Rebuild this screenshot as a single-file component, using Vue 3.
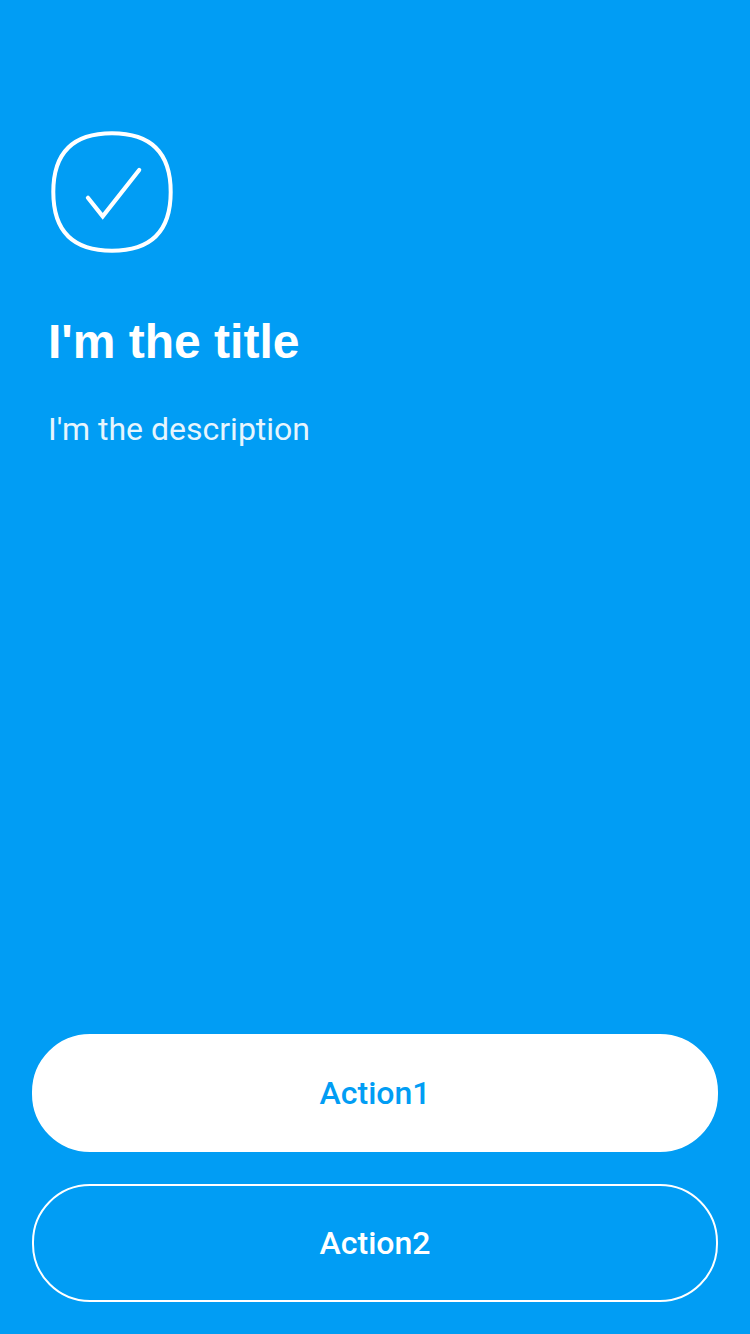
<script setup>
const actions = [
  { label: 'Action1', kind: 'primary' },
  { label: 'Action2', kind: 'secondary' },
]
</script>

<template>
  <main class="feedback">
    <section class="content">
      <svg class="icon" viewBox="0 0 128 128" fill="none" stroke="#fff" stroke-width="4" stroke-linecap="round" stroke-linejoin="round">
        <path d="M64 5.300C103 5.300 122.700 25 122.700 64S103 122.700 64 122.700 5.300 103 5.300 64 25 5.300 64 5.300Z" />
        <path d="M39.900 69.800L54.700 88.400 91.200 42" stroke-width="4.200" stroke-linejoin="miter" />
      </svg>
      <h1 class="title">I'm the title</h1>
      <p class="description">I'm the description</p>
    </section>
    <footer class="actions">
      <button v-for="a in actions" :key="a.label" class="button" :class="a.kind">{{ a.label }}</button>
    </footer>
  </main>
</template>

<style>
body {
  margin: 0;
}
</style>

<style scoped>
.feedback {
  box-sizing: border-box;
  height: 1334px;
  padding: 128px 32px 32px;
  display: flex;
  flex-direction: column;
  justify-content: space-between;
  background: #019df4;
  color: #fff;
  font-family: Roboto, sans-serif;
}
.content {
  padding: 0 16px;
}
.icon {
  display: block;
  width: 128px;
  height: 128px;
}
.title {
  margin: 54px 0 0;
  font: bold 48px/64px "Liberation Sans", Arial, sans-serif;
}
.description {
  margin: 31px 0 0;
  font-size: 32px;
  line-height: 48px;
  font-weight: 400;
  opacity: 0.9;
}
.actions {
  display: flex;
  flex-direction: column;
  gap: 32px;
}
.button {
  box-sizing: border-box;
  height: 118px;
  padding: 0;
  border: 2px solid #fff;
  border-radius: 58px;
  font: 500 32px/48px Roboto, sans-serif;
}
.primary {
  background: #fff;
  color: #019df4;
}
.secondary {
  background: transparent;
  color: #fff;
}
</style>
